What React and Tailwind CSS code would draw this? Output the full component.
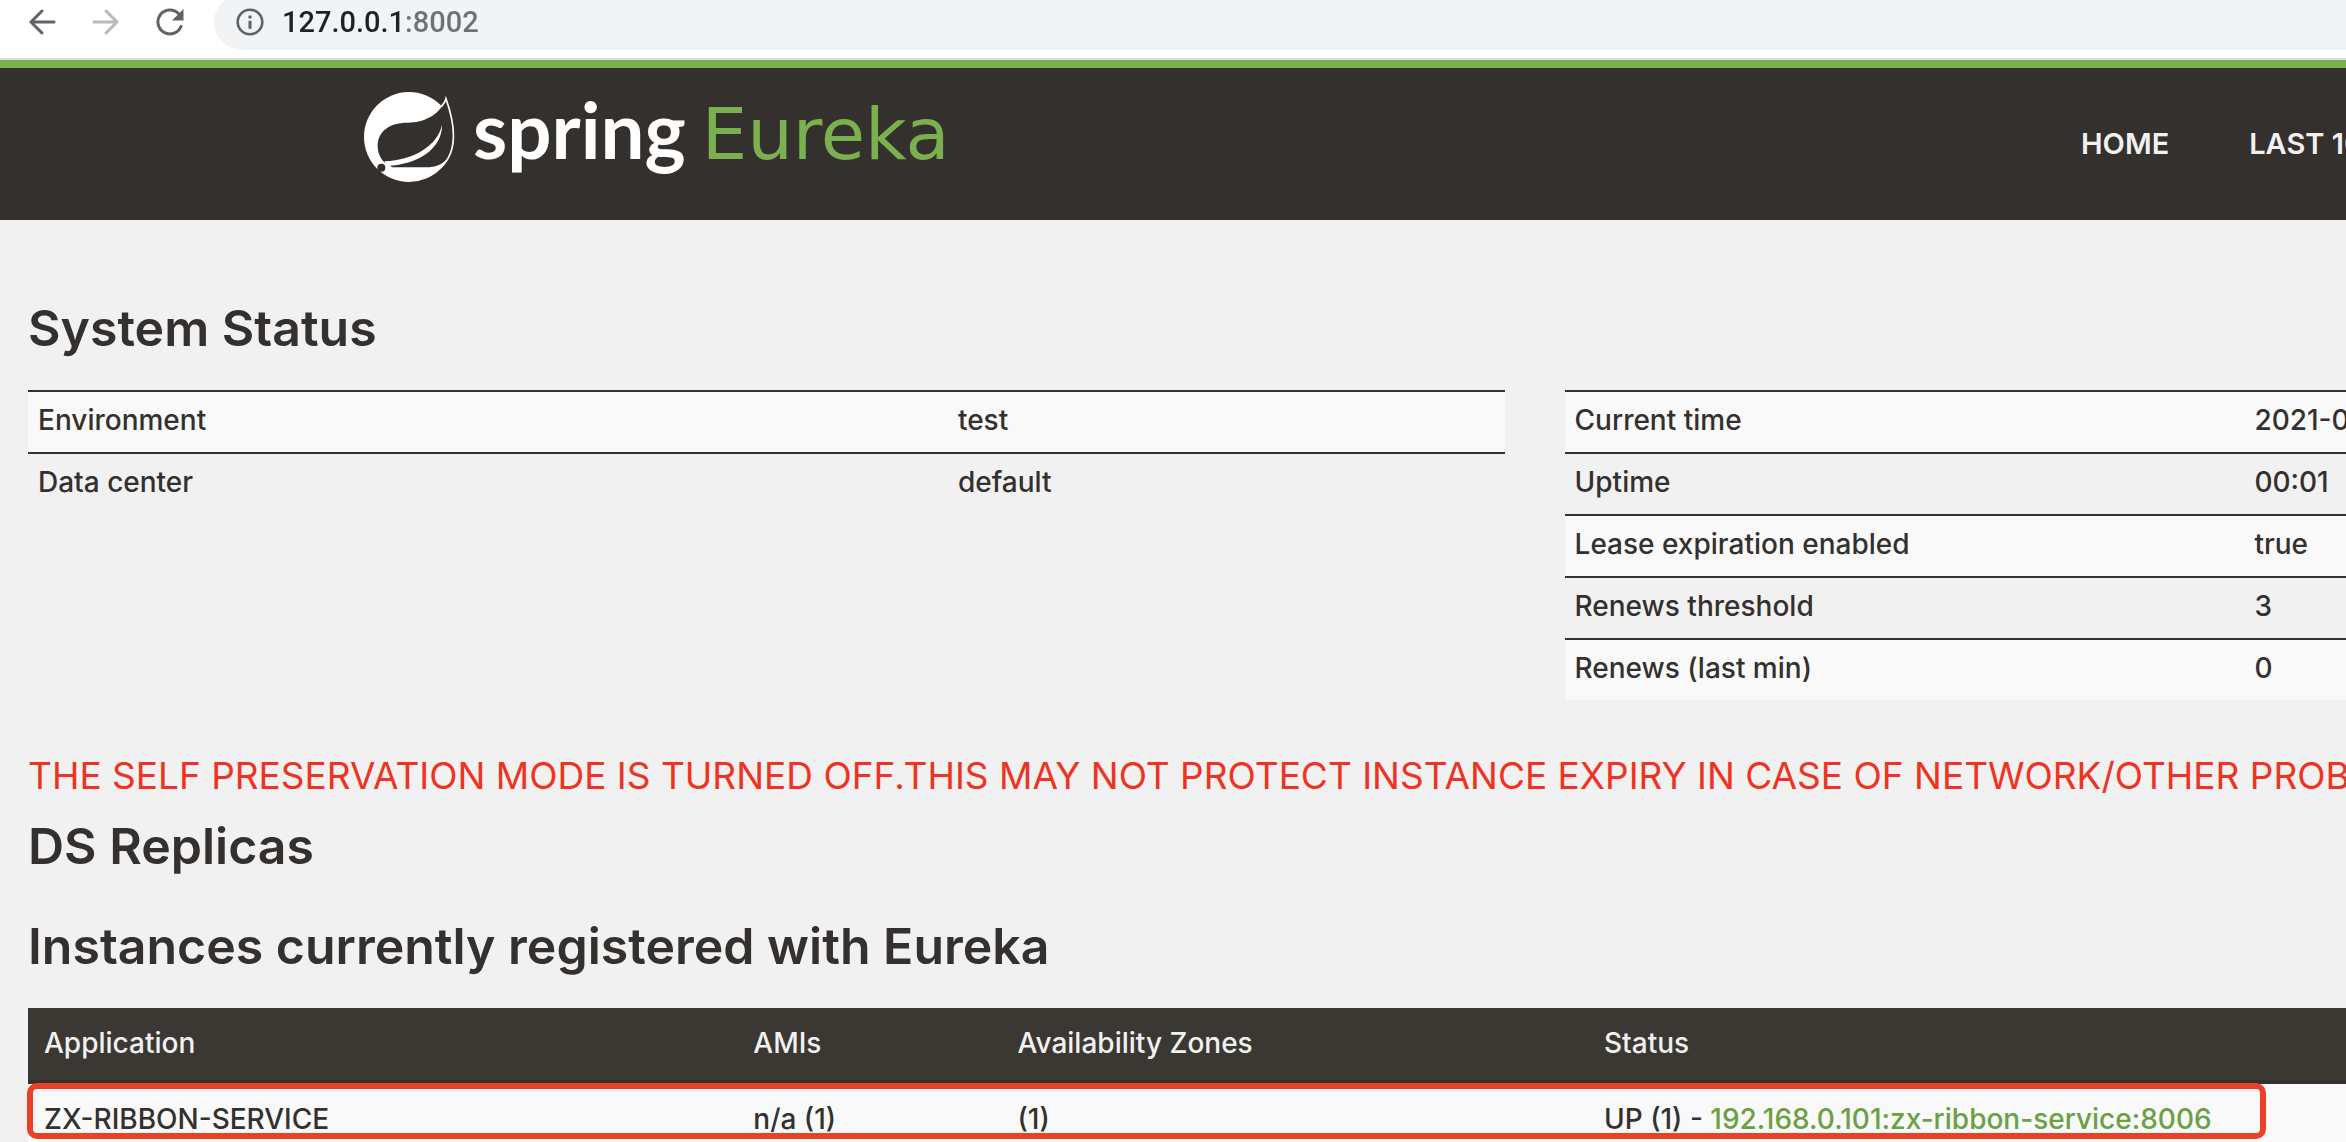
import { useState } from "react";

const generalInfo = [
  ["Environment", "test"],
  ["Data center", "default"],
];

const runtimeInfo = [
  ["Current time", "2021-0"],
  ["Uptime", "00:01"],
  ["Lease expiration enabled", "true"],
  ["Renews threshold", "3"],
  ["Renews (last min)", "0"],
];

const instances = [
  {
    name: "ZX-RIBBON-SERVICE",
    amis: "n/a (1)",
    zones: "(1)",
    status: "UP (1) - ",
    id: "192.168.0.101:zx-ribbon-service:8006",
  },
];

function BrowserBar() {
  const [url, setUrl] = useState("127.0.0.1:8002");

  return (
    <div className="flex h-[60px] items-center border-b-2 border-[#dadce0] bg-white pb-3.5 pl-7 text-[#5f6368]">
      <button aria-label="Back" className="mr-9 shrink-0">
        <svg className="h-7 w-7" viewBox="0 0 28 28" fill="none" stroke="currentColor" strokeWidth="3" strokeLinecap="round">
          <path d="M26 14H3M14 3L3 14L14 25" />
        </svg>
      </button>
      <button aria-label="Forward" className="mr-9 shrink-0 text-[#bababa]">
        <svg className="h-7 w-7" viewBox="0 0 28 28" fill="none" stroke="currentColor" strokeWidth="3" strokeLinecap="round">
          <path d="M2 14H25M14 3L25 14L14 25" />
        </svg>
      </button>
      <button aria-label="Reload" className="mr-[30px] shrink-0">
        <svg className="h-7 w-7" viewBox="0 0 28 28">
          <path d="M25 18.5A12 12 0 1 1 22.5 5.5" fill="none" stroke="currentColor" strokeWidth="3" strokeLinecap="round" />
          <path d="M27.5 1V12.5H16Z" fill="currentColor" />
        </svg>
      </button>
      <div className="flex h-14 flex-1 shrink-0 items-center gap-[18px] rounded-l-full bg-[#f1f3f4] pl-[22px]">
        <svg className="h-7 w-7 shrink-0" viewBox="0 0 28 28">
          <circle cx="14" cy="14" r="12.3" fill="none" stroke="currentColor" strokeWidth="2.6" />
          <path d="M12.5 7.5h3v3h-3zM12.5 12.7h3v8h-3z" fill="currentColor" />
        </svg>
        <input
          aria-label="Address"
          value={url}
          onChange={(e) => setUrl(e.target.value)}
          className="min-w-0 flex-1 bg-[linear-gradient(to_right,#202124_118px,#6f7275_118px)] bg-clip-text font-[Roboto,sans-serif] text-[29px] leading-10 text-transparent outline-none"
        />
      </div>
    </div>
  );
}

function Leaf() {
  return (
    <svg className="h-[90px] w-[91px] shrink-0" viewBox="27 36 273 270">
      <circle cx="162" cy="171" r="135" fill="#fff" />
      <path
        d="M272 60C250 110 200 128 160 128C95 128 68 160 68 198C68 218 76 234 88 247L112 262H215C262 262 284 236 292 205C302 165 292 110 274 54Z"
        fill="#34302d"
      />
      <path
        d="M259 80Q270 68 273 56C292 110 301 165 291 205C286 226 274 246 258 262"
        fill="none"
        stroke="#fff"
        strokeWidth="5"
      />
      <path d="M261 134C248 196 178 240 88 244L98 258C190 252 262 206 261 134Z" fill="#fff" />
      <circle cx="79" cy="263" r="12" fill="#34302d" />
    </svg>
  );
}

function Header() {
  return (
    <header className="flex h-40 items-center border-t-8 border-[#7ab04f] bg-[#34302d]">
      <a href="#home" className="ml-[364px] flex h-[104px] shrink-0 gap-[18px] whitespace-nowrap">
        <Leaf />
        <span className="-mt-2 font-[Lato,sans-serif] text-[78px] leading-[90px] font-bold text-white">
          spring
          <span className="ml-4 font-['DejaVu_Sans',sans-serif] text-[72px] leading-none font-normal text-[#7ab04f]">
            Eureka
          </span>
        </span>
      </a>
      <nav className="ml-auto flex w-[265px] shrink-0 gap-20 text-[29px] leading-10 font-semibold whitespace-nowrap text-[#f1f1f1]">
        <a href="#home">HOME</a>
        <a href="#lastn">LAST 10</a>
      </nav>
    </header>
  );
}

function InfoTable({ rows, labelWidth }) {
  return (
    <table className="w-full table-fixed border-collapse text-left whitespace-nowrap">
      <tbody>
        {rows.map(([label, value]) => (
          <tr key={label} className="odd:bg-[#f9f9f9]">
            <th scope="row" className={`${labelWidth} border-t-2 border-[#34302d] px-2.5 pt-2 pb-3 font-medium`}>
              {label}
            </th>
            <td className="border-t-2 border-[#34302d] px-2.5 pt-2 pb-3">{value}</td>
          </tr>
        ))}
      </tbody>
    </table>
  );
}

function InstancesTable() {
  return (
    <div className="relative">
      <table className="w-full table-fixed border-separate border-spacing-0 text-left whitespace-nowrap">
        <thead className="bg-[#3b3833] text-[#f1f1f1]">
          <tr>
            <th className="w-[30.6%] border-b-4 border-[#34302d] px-4 pt-[15px] pb-[17px] font-medium">Application</th>
            <th className="w-[11.4%] border-b-4 border-[#34302d] px-4 pt-[15px] pb-[17px] font-medium">AMIs</th>
            <th className="w-[25.3%] border-b-4 border-[#34302d] px-4 pt-[15px] pb-[17px] font-medium">Availability Zones</th>
            <th className="border-b-4 border-[#34302d] px-4 pt-[15px] pb-[17px] font-medium">Status</th>
          </tr>
        </thead>
        <tbody className="bg-[#f9f9f9]">
          {instances.map((app) => (
            <tr key={app.name}>
              <td className="px-4 pt-[15px] pb-[17px]">{app.name}</td>
              <td className="px-4 pt-[15px] pb-[17px]">{app.amis}</td>
              <td className="px-4 pt-[15px] pb-[17px]">{app.zones}</td>
              <td className="px-4 pt-[15px] pb-[17px]">
                {app.status}
                <a href="#instance" className="text-[#6ba043]">
                  {app.id}
                </a>
              </td>
            </tr>
          ))}
        </tbody>
      </table>
      {/* highlight around the registered service */}
      <div className="pointer-events-none absolute top-[75px] right-20 -left-px h-14 rounded-[10px] border-6 border-[#eb4026]" />
    </div>
  );
}

function App() {
  return (
    <div className="h-screen overflow-hidden bg-[#f1f1f1] font-[Inter,sans-serif] text-[28px] leading-10 font-medium text-[#34302d]">
      <BrowserBar />
      <Header />
      <main className="pt-20 pl-7">
        <h1 className="mb-[34px] text-[50px] leading-14 font-semibold">System Status</h1>
        <div className="flex items-start gap-[60px]">
          <div className="w-[63.7%] shrink-0">
            <InfoTable rows={generalInfo} labelWidth="w-[62.3%]" />
          </div>
          <div className="min-w-0 flex-1">
            <InfoTable rows={runtimeInfo} labelWidth="w-[87%]" />
          </div>
        </div>
        <h4 className="mt-[52px] text-[37px] leading-12 font-normal whitespace-nowrap text-[#ee3322]">
          THE SELF PRESERVATION MODE IS TURNED OFF.THIS MAY NOT PROTECT INSTANCE EXPIRY IN CASE OF NETWORK/OTHER PROB
        </h4>
        <h1 className="mt-[18px] text-[50px] leading-14 font-semibold">DS Replicas</h1>
        <h1 className="mt-11 mb-[34px] text-[50px] leading-14 font-semibold">
          Instances currently registered with Eureka
        </h1>
        <InstancesTable />
      </main>
    </div>
  );
}

export default App;
